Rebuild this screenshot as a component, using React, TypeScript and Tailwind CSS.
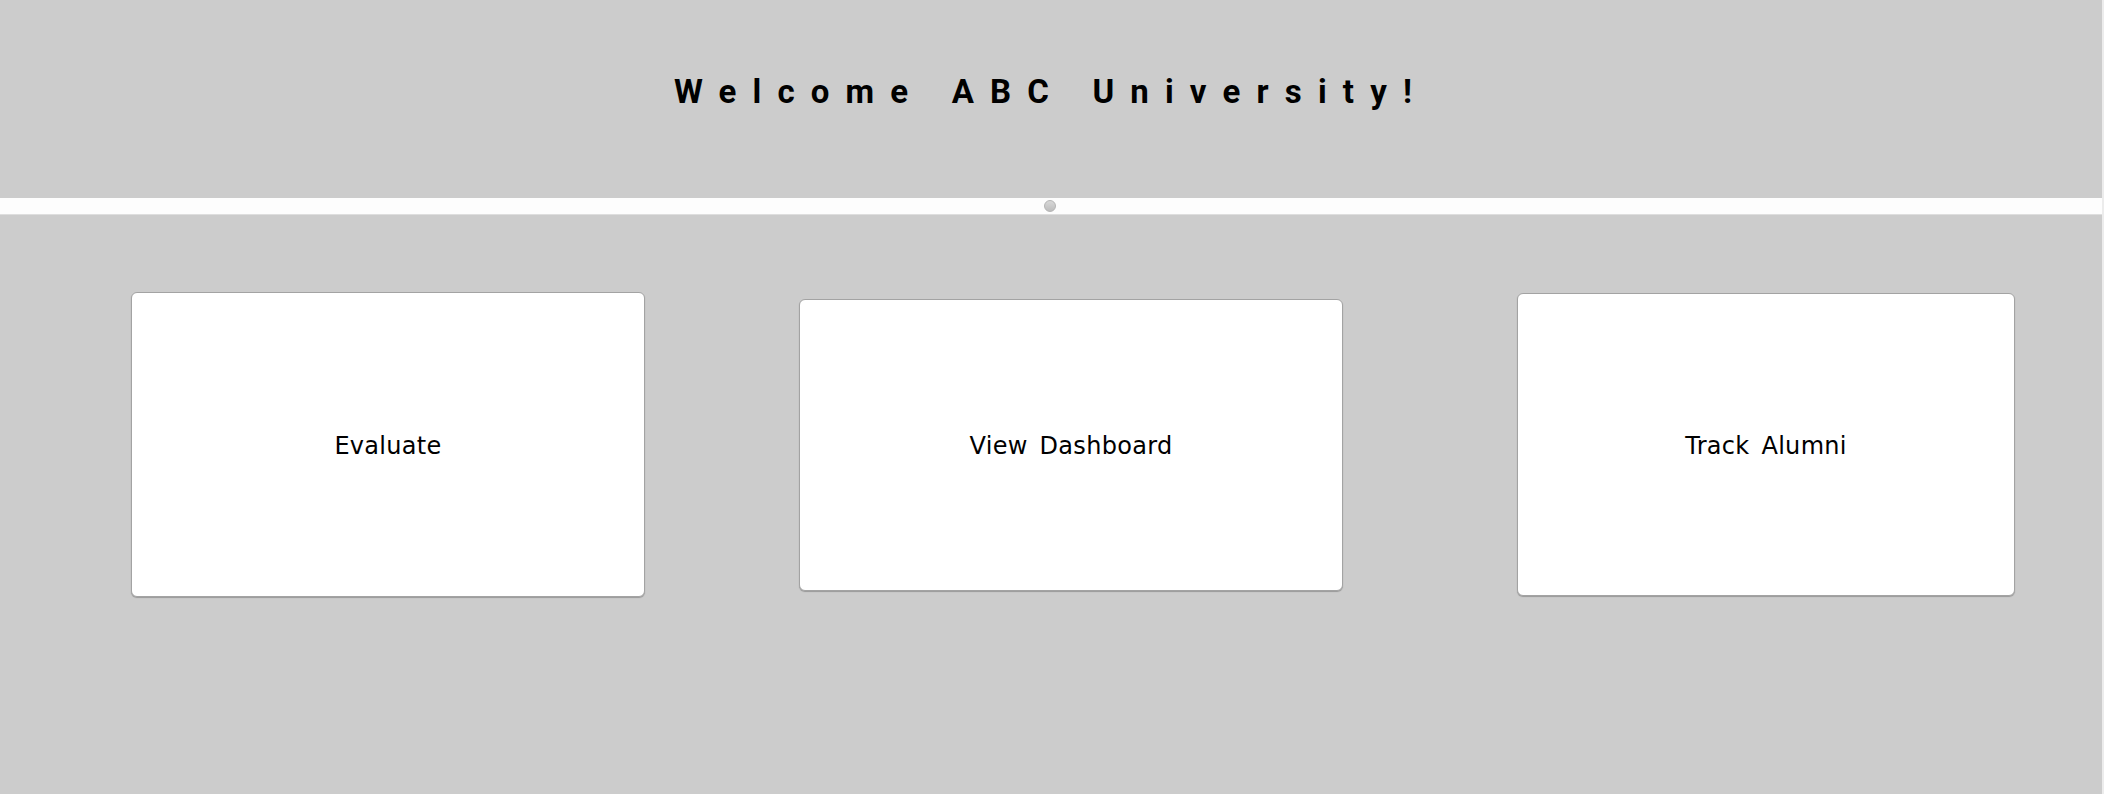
import React from "react";

function Card({ label, className }: { label: string; className: string }) {
  return (
    <div
      className={
        "flex items-center justify-center rounded-[6px] border border-[#a3a3a3] bg-white shadow-[0_1px_1px_rgba(0,0,0,0.25)] " +
        className
      }
    >
      <span
        className="pt-[2px] text-[24px] tracking-[0.3px] text-black [word-spacing:4px]"
        style={{ fontFamily: '"DejaVu Sans", sans-serif' }}
      >
        {label}
      </span>
    </div>
  );
}

export default function App() {
  return (
    <div className="flex h-[794px] w-[2104px] overflow-hidden bg-[#ececec]">
      <div className="flex h-full w-[2102px] flex-col bg-[#cccccc]">
        <header className="flex h-[198px] items-start justify-center pt-[71px]">
          <h1
            className="text-[33px] font-bold leading-[42px] tracking-[0.49em] text-black [word-spacing:3px]"
            style={{ fontFamily: '"Liberation Sans Narrow", Roboto, sans-serif' }}
          >
            Welcome ABC University!
          </h1>
        </header>
        <div className="flex h-[17px] items-center justify-center border-b border-[#dedede] bg-[#fdfdfd]">
          <div className="ml-[-2px] h-[12px] w-[12px] rounded-full border border-[#b4b4b4] bg-gradient-to-b from-[#d8d8d8] to-[#bdbdbd]" />
        </div>
        <main className="flex flex-1 flex-col pt-[77px]">
          <div className="flex h-[305px] items-center pl-[131px]">
            <Card label="Evaluate" className="h-[305px] w-[514px]" />
            <Card label="View Dashboard" className="ml-[154px] h-[292px] w-[544px]" />
            <Card label="Track Alumni" className="ml-[174px] h-[303px] w-[498px]" />
          </div>
        </main>
      </div>
    </div>
  );
}
